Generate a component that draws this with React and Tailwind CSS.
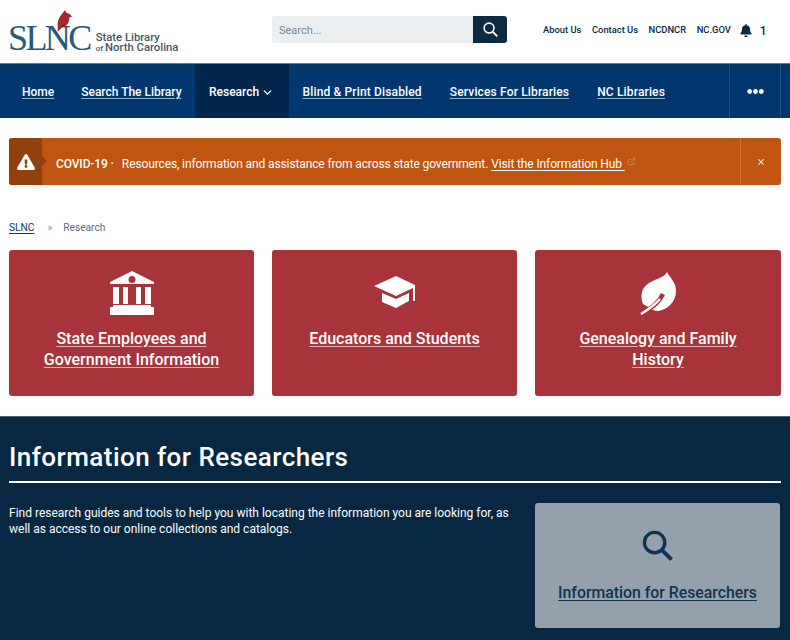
import { ChevronDown, ExternalLink, X } from 'lucide-react';
import { FaBell, FaEllipsisH, FaExclamationTriangle } from 'react-icons/fa';

const NavLink = ({ children }) => (
  <a className="text-[12px] font-medium text-white underline underline-offset-2 decoration-[#9fb3c8] whitespace-nowrap">
    {children}
  </a>
);

const TopLink = ({ children }) => (
  <a className="text-[9.4px] font-medium text-[#0b2a42] whitespace-nowrap">{children}</a>
);

// Cardinal perched on the logo
const Cardinal = () => (
  <svg viewBox="0 0 20 24" className="w-[18px] h-[22px]">
    <path d="M11 0l2 3 3 1 3 3-3 1c0 5-2 8-5 10l-3 1-5 5 0-6C2 11 6 6 11 0z" fill="#a5282f" />
    <path d="M6 19l4-3 1 2-3 1z" fill="#6d1d22" />
  </svg>
);

const Magnifier = ({ className }) => (
  <svg viewBox="0 0 32 32" className={className} fill="none" stroke="currentColor">
    <circle cx="13" cy="13" r="10.5" strokeWidth="3.5" />
    <path d="M21 21l9.5 9.5" strokeWidth="4" />
  </svg>
);

const Building = () => (
  <svg viewBox="0 0 44 44" className="w-[44px] h-[44px]" fill="#fff">
    <path d="M22 0L44 11V13H0V11Z" />
    <circle cx="22" cy="8.5" r="3.5" fill="#a8333a" />
    <rect x="3" y="16" width="6" height="17" />
    <rect x="13" y="16" width="5" height="17" />
    <rect x="26" y="16" width="5" height="17" />
    <rect x="35" y="16" width="6" height="17" />
    <rect x="3" y="34" width="38" height="2" />
    <rect x="0" y="36" width="44" height="8" rx="1" />
  </svg>
);

const GradCap = () => (
  <svg viewBox="0 0 41 33" className="w-[41px] h-[33px]" fill="#fff">
    <path d="M0 10L22 0L41 9V11L22 20Z" />
    <path d="M8 17L22 23L35 17V25L22 32L8 26Z" />
    <rect x="39" y="10" width="2" height="15" />
  </svg>
);

const Leaf = () => (
  <svg viewBox="0 0 36 44" className="w-[36px] h-[44px]" fill="none">
    <path
      fill="#fff"
      d="M27 1C30 7 36 11 36 20C36 31 27 39 18 40C15 40 12 39 10 37L3 33C0 25 1 17 9 12C15 8 24 7 27 1Z"
    />
    <path d="M5 41C12 36 18 33 23 23" stroke="#a8333a" strokeWidth="4.5" />
    <path d="M1 43C9 38 15 34 20 28" stroke="#fff" strokeWidth="2.5" />
  </svg>
);

const Tile = ({ icon, children }) => (
  <a className="flex flex-col items-center h-[146px] pt-[20px] rounded-[3px] bg-[#a8333a] text-white text-center">
    <div className="h-[45px] flex items-center justify-center">{icon}</div>
    <div className="mt-[13px] px-4 text-[16px] leading-[21px] font-medium underline underline-offset-2 decoration-[#e0b4b7]">
      {children}
    </div>
  </a>
);

export default function App() {
  return (
    <div className="w-[790px] h-[640px] overflow-hidden bg-white font-['Roboto',sans-serif]">
      {/* Top header */}
      <header className="h-[64px] flex items-center border-b border-[#5b7d99] pl-[9px] pb-[4px]">
        <div className="flex items-end shrink-0 w-[263px] h-[52px] mt-[2px] pt-[8px]">
          <div className="relative -ml-[1px]">
            <div className="absolute left-[47px] top-[-10px]"><Cardinal /></div>
            <span className="font-['Liberation_Serif',serif] text-[36px] leading-[36px] tracking-[-2.6px] text-[#27597a]">SLNC</span>
          </div>
          <div className="ml-[6px] mb-[3px] text-[11.3px] leading-[10px] text-[#4a5560] font-medium whitespace-nowrap">
            <div>State Library</div>
            <div><span className="text-[8px]">of </span>North Carolina</div>
          </div>
        </div>
        <div className="flex shrink-0 w-[235px] h-[27px] rounded-[3px] overflow-hidden">
          <div className="flex-1 bg-[#eceff2] pl-[7px] text-[11px] leading-[29px] text-[#7d868e]">Search...</div>
          <div className="w-[34px] bg-[#0b2a42] flex items-center justify-center text-white">
            <Magnifier className="w-[15px] h-[15px]" />
          </div>
        </div>
        <nav className="ml-[36px] mt-[2px] flex items-center gap-[10.5px]">
          <TopLink>About Us</TopLink>
          <TopLink>Contact Us</TopLink>
          <TopLink>NCDNCR</TopLink>
          <TopLink>NC.GOV</TopLink>
          <FaBell className="w-[12px] h-[13px] text-[#0b2a42] -ml-[1px]" />
          <span className="text-[12px] font-medium text-[#0b2a42] -ml-[3px]">1</span>
        </nav>
      </header>

      {/* Main nav */}
      <nav className="h-[54px] flex items-stretch bg-[#00376f] pl-[22px]">
        <div className="flex items-center gap-[27px] pt-[2px]">
          <NavLink>Home</NavLink>
          <NavLink>Search The Library</NavLink>
        </div>
        <a className="ml-[13px] w-[94px] pt-[2px] flex items-center justify-center gap-[2px] bg-[#02264e] text-white text-[12px] font-medium">
          Research <ChevronDown className="w-[13px] h-[13px]" strokeWidth={2.5} />
        </a>
        <div className="ml-[14px] flex items-center gap-[28px] pt-[2px] tracking-[0.15px]">
          <NavLink>Blind &amp; Print Disabled</NavLink>
          <NavLink>Services For Libraries</NavLink>
          <NavLink>NC Libraries</NavLink>
        </div>
        <div className="ml-auto flex">
          <button className="w-[52px] flex items-center justify-center border-x border-[#1f4e80] text-white">
            <FaEllipsisH className="w-[17px] h-[17px]" />
          </button>
          <div className="w-[9px]" />
        </div>
      </nav>

      {/* Alert */}
      <div className="mx-[9px] mt-[20px] h-[47px] flex items-stretch rounded-[3px] bg-[#bf5510] text-white">
        <div className="relative w-[33px] flex items-center justify-center rounded-l-[3px] bg-[#92400e]">
          <FaExclamationTriangle className="w-[18px] h-[16px]" />
          <div className="absolute right-[-5px] top-[18px] w-0 h-0 border-y-[5px] border-y-transparent border-l-[5px] border-l-[#92400e]" />
        </div>
        <div className="flex-1 flex items-center pl-[14px] pt-[5px] text-[12px] tracking-[-0.12px] whitespace-nowrap">
          <span className="font-medium">COVID-19 ·</span>
          <span className="ml-[8px]">Resources, information and assistance from across state government.</span>
          <a className="ml-[3px] underline underline-offset-2">Visit the Information Hub&nbsp;</a>
          <ExternalLink className="ml-[2px] mb-[6px] w-[9px] h-[9px] text-[#d98a57]" />
        </div>
        <button className="w-[41px] flex items-center justify-center border-l border-[#d0743a]">
          <X className="w-[10px] h-[10px]" strokeWidth={2.5} />
        </button>
      </div>

      {/* Breadcrumb */}
      <div className="mx-[9px] mt-[35px] h-[15px] flex items-center text-[10.2px] text-[#5f6b76]">
        <a className="text-[#0b3a66] underline underline-offset-2">SLNC</a>
        <span className="ml-[13px] text-[#8a949d]">»</span>
        <span className="ml-[11px]">Research</span>
      </div>

      {/* Tiles */}
      <div className="mx-[9px] mt-[15px] grid grid-cols-[245px_245px_246px] gap-[18px]">
        <Tile icon={<Building />}>State Employees and Government Information</Tile>
        <Tile icon={<GradCap />}>Educators and Students</Tile>
        <Tile icon={<Leaf />}>Genealogy and Family<br />History</Tile>
      </div>

      {/* Researchers */}
      <section className="mt-[20px] h-[224px] bg-[#082742] border-t border-[#4a6478] px-[9px] text-white">
        <h2 className="pt-[23px] h-[66px] border-b-[2px] border-white text-[26px] leading-[34px] font-medium tracking-[0.45px]">
          Information for Researchers
        </h2>
        <div className="flex mt-[20px] gap-[22px]">
          <p className="w-[504px] pt-[2px] text-[12px] leading-[16px]">
            Find research guides and tools to help you with locating the information you are looking for, as well as access to our online collections and catalogs.
          </p>
          <a className="w-[245px] h-[125px] flex flex-col items-center rounded-[3px] bg-[#94a0ac] text-[#0f3350]">
            <Magnifier className="mt-[27px] w-[31px] h-[31px]" />
            <span className="mt-[20px] text-[15.8px] font-medium underline underline-offset-2">Information for Researchers</span>
          </a>
        </div>
      </section>
    </div>
  );
}
